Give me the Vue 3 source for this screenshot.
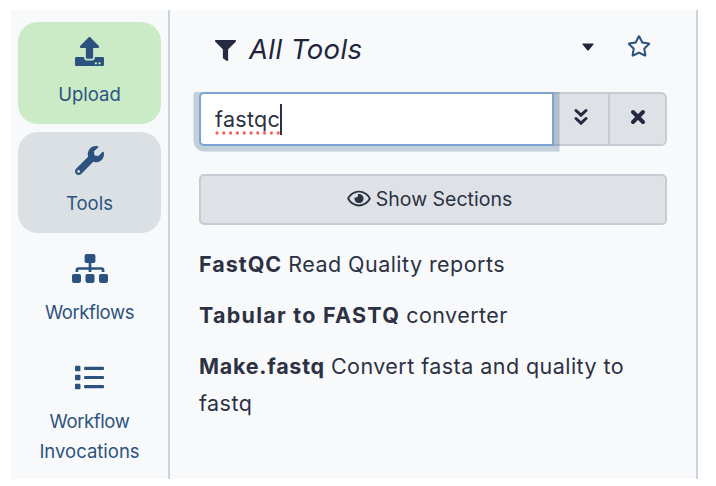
<script setup>
import { ref } from 'vue'

const query = ref('fastqc')

const activities = [
  { id: 'upload', lines: ['Upload'] },
  { id: 'tools', lines: ['Tools'] },
  { id: 'workflows', lines: ['Workflows'] },
  { id: 'invocations', lines: ['Workflow', 'Invocations'] },
]

const tools = [
  { id: 'fastqc', name: 'FastQC', description: 'Read Quality reports' },
  { id: 'tabular', name: 'Tabular to FASTQ', description: 'converter' },
  { id: 'make', name: 'Make.fastq', description: 'Convert fasta and quality to fastq' },
]
</script>

<template>
  <div class="page">
    <div class="app">
      <nav class="activity-bar">
        <div v-for="item in activities" :key="item.id" class="activity" :class="item.id">
          <svg v-if="item.id === 'upload'" class="activity-icon" viewBox="0 0 512 512">
            <path d="M296 384h-80c-13.3 0-24-10.7-24-24V192h-87.7c-17.8 0-26.7-21.5-14.1-34.1L242.3 5.7c7.5-7.5 19.8-7.5 27.3 0l152.2 152.2c12.6 12.6 3.7 34.1-14.1 34.1H320v168c0 13.3-10.7 24-24 24zm216-8v112c0 13.3-10.7 24-24 24H24c-13.3 0-24-10.7-24-24V376c0-13.3 10.7-24 24-24h136v8c0 30.9 25.1 56 56 56h80c30.9 0 56-25.1 56-56v-8h136c13.3 0 24 10.7 24 24zm-124 88c0-11-9-20-20-20s-20 9-20 20 9 20 20 20 20-9 20-20zm64 0c0-11-9-20-20-20s-20 9-20 20 9 20 20 20 20-9 20-20z" />
          </svg>
          <svg v-else-if="item.id === 'tools'" class="activity-icon" viewBox="0 0 512 512">
            <path d="M507.73 109.1c-2.24-9.03-13.54-12.09-20.12-5.51l-74.36 74.36-67.88-11.31-11.31-67.88 74.36-74.36c6.62-6.62 3.43-17.9-5.66-20.16-47.38-11.74-99.55.91-136.58 37.93-39.64 39.64-50.55 97.1-34.05 147.2L18.74 402.76c-24.99 24.99-24.99 65.51 0 90.5 24.99 24.99 65.51 24.99 90.5 0l213.21-213.21c50.12 16.71 107.47 5.68 147.37-34.22 37.07-37.07 49.7-89.32 37.91-136.73zM64 472c-13.25 0-24-10.75-24-24 0-13.26 10.75-24 24-24s24 10.74 24 24c0 13.25-10.75 24-24 24z" />
          </svg>
          <svg v-else-if="item.id === 'workflows'" class="activity-icon wide" viewBox="0 0 640 512">
            <rect x="224" y="0" width="192" height="160" rx="32" />
            <rect x="0" y="352" width="160" height="160" rx="32" />
            <rect x="240" y="352" width="160" height="160" rx="32" />
            <rect x="480" y="352" width="160" height="160" rx="32" />
            <path d="M296 150h48v82h186c26 0 46 20 46 46v42h-48v-40H344v40h-48v-40H112v40H64v-42c0-26 20-46 46-46h186z" />
          </svg>
          <svg v-else class="activity-icon" viewBox="0 0 512 512">
            <rect x="0" y="48" width="96" height="96" rx="16" />
            <rect x="0" y="208" width="96" height="96" rx="16" />
            <rect x="0" y="368" width="96" height="96" rx="16" />
            <rect x="160" y="68" width="352" height="56" rx="16" />
            <rect x="160" y="228" width="352" height="56" rx="16" />
            <rect x="160" y="388" width="352" height="56" rx="16" />
          </svg>
          <div class="activity-label">
            <div v-for="line in item.lines" :key="line" :class="{ tight: line.startsWith('Work') }">{{ line }}</div>
          </div>
        </div>
      </nav>

      <main class="tool-panel">
        <header class="panel-header">
          <svg class="filter-icon" viewBox="0 0 512 512">
            <path d="M487.976 0H24.028C2.71 0-8.047 25.866 7.058 40.971L192 225.941V432c0 7.831 3.821 15.17 10.237 19.662l80 55.98C298.02 518.69 320 507.493 320 487.98V225.941l184.947-184.97C520.021 25.896 509.338 0 487.976 0z" />
          </svg>
          <h2 class="panel-title">All Tools</h2>
          <svg class="caret-icon" viewBox="0 0 12 8"><path d="M1 .5h10q1 0 .4.9L7 6.9q-1 1-2 0L.6 1.4Q0 .5 1 .5z" /></svg>
          <svg class="star-icon" viewBox="0 0 576 512">
            <path d="M528.1 171.5L382 150.2 316.7 17.8c-11.7-23.6-45.6-23.9-57.4 0L194 150.2 47.9 171.5c-26.2 3.8-36.7 36.1-17.7 54.6l105.7 103-25 145.5c-4.5 26.3 23.2 46 46.4 33.7L288 439.6l130.7 68.7c23.2 12.2 50.9-7.4 46.4-33.7l-25-145.5 105.7-103c19-18.5 8.5-50.8-17.7-54.6zM388.6 312.3l23.7 138.4L288 385.4l-124.3 65.3 23.7-138.4-100.6-98 139-20.2 62.2-126 62.2 126 139 20.2-100.6 98z" />
          </svg>
        </header>

        <div class="search">
          <div class="search-field">
            <span class="query">{{ query }}<svg class="spelling" viewBox="0 0 66 4"><path d="M2 2H65" /></svg></span><span class="cursor"></span>
          </div>
          <button class="search-button advanced">
            <svg class="chevrons" viewBox="0 0 14 18"><path d="M2 2.5l5 4.7 5-4.7M2 10.5l5 4.7 5-4.7" /></svg>
          </button>
          <button class="search-button clear">
            <svg class="cross" viewBox="0 0 16 16"><path d="M3 3l10 10M13 3L3 13" /></svg>
          </button>
        </div>

        <button class="sections-button">
          <svg class="eye" viewBox="0 0 576 512">
            <path d="M288 144a110.94 110.94 0 0 0-31.24 5 55.4 55.4 0 0 1 7.24 27 56 56 0 0 1-56 56 55.4 55.4 0 0 1-27-7.24A111.71 111.71 0 1 0 288 144zm284.52 97.4C518.29 135.59 410.93 64 288 64S57.68 135.64 3.48 241.41a32.35 32.35 0 0 0 0 29.19C57.71 376.41 165.07 448 288 448s230.32-71.64 284.52-177.41a32.35 32.35 0 0 0 0-29.19zM288 400c-98.65 0-189.09-55-237.93-144C98.91 167 189.34 112 288 112s189.09 55 237.93 144C477.1 345 386.66 400 288 400z" />
          </svg>
          <span class="sections-label">Show Sections</span>
        </button>

        <div class="tool-list">
          <div v-for="tool in tools" :key="tool.id" class="tool" :class="'tool-' + tool.id">
            <b>{{ tool.name }}</b> <span>{{ tool.description }}</span>
          </div>
        </div>
      </main>
    </div>
  </div>
</template>

<style>
body {
  background: #fff;
}
</style>

<style scoped>
.page {
  box-sizing: border-box;
  width: 716px;
  height: 486px;
  padding: 10px 18px 7px 11px;
  overflow: hidden;
  font-family: Inter, "Liberation Sans", sans-serif;
  color: #2c3143;
}
.app {
  box-sizing: border-box;
  display: flex;
  height: 469px;
  background: #f8f9fb;
  border-right: 2px solid #ccd3db;
}
.activity-bar {
  box-sizing: border-box;
  display: flex;
  flex-direction: column;
  gap: 8px;
  flex: 0 0 159px;
  padding: 12px 7px 0 7px;
  border-right: 2px solid #ccd3db;
  color: #2c5380;
}
.activity {
  box-sizing: border-box;
  display: flex;
  flex-direction: column;
  align-items: center;
  flex: 0 0 101px;
  padding-top: 13px;
  border-radius: 20px;
}
.activity.upload {
  flex-basis: 102px;
  padding-top: 15px;
  background: #cbeac6;
}
.activity.tools {
  padding-top: 14px;
  background: #dbe0e5;
}
.activity-icon {
  flex: none;
  width: 29px;
  height: 29px;
  fill: currentColor;
}
.activity-icon.wide {
  width: 36px;
}
.activity-label {
  margin-top: 14px;
  font-size: 18.5px;
  line-height: 29.5px;
  text-align: center;
  white-space: nowrap;
}
.workflows .activity-label,
.invocations .activity-label {
  margin-top: 15px;
}
.activity-label .tight {
  letter-spacing: -0.4px;
}
.tool-panel {
  box-sizing: border-box;
  flex: 1;
  min-width: 0;
  padding: 20px 29px 0;
}
.panel-header {
  display: flex;
  align-items: center;
  height: 38px;
  padding: 0 16px;
}
.filter-icon {
  width: 21px;
  height: 21px;
  margin-top: 3px;
  fill: #252a42;
}
.panel-title {
  flex: 1;
  margin: 0 0 0 13px;
  font-size: 27.5px;
  font-style: italic;
  font-weight: 400;
  letter-spacing: 0.4px;
  line-height: 38px;
  color: #20253d;
}
.caret-icon {
  width: 12px;
  height: 8px;
  margin-right: 33px;
  margin-top: -4px;
  fill: #20253d;
}
.star-icon {
  width: 24px;
  height: 22px;
  margin-top: -6px;
  fill: #2c5380;
}
.search {
  display: flex;
  height: 54px;
  margin-top: 24px;
}
.search-field {
  box-sizing: border-box;
  position: relative;
  z-index: 1;
  display: flex;
  align-items: center;
  flex: 1;
  padding-left: 14px;
  border: 2px solid #7ca3d2;
  border-radius: 5px 0 0 5px;
  background: #fff;
  box-shadow: 0 0 0 5.5px rgba(37, 83, 122, 0.25);
  clip-path: inset(0 -6px -6px -6px);
  font-size: 21.5px;
  letter-spacing: 0.3px;
  line-height: 30px;
}
.query {
  position: relative;
}
.spelling {
  position: absolute;
  left: 0;
  bottom: -1px;
  width: 66px;
  height: 4px;
}
.spelling path {
  fill: none;
  stroke: #f0665c;
  stroke-width: 3.3;
  stroke-linecap: round;
  stroke-dasharray: 0 6.8;
}
.cursor {
  width: 1.5px;
  height: 31px;
  background: #2c3143;
}
.search-button,
.sections-button {
  box-sizing: border-box;
  display: flex;
  align-items: center;
  justify-content: center;
  padding: 0;
  border: 2px solid #c5ccd4;
  background: #dee2e6;
  font: inherit;
  color: inherit;
}
.advanced {
  width: 54px;
  border-width: 2px 0;
}
.clear {
  width: 59px;
  border-radius: 0 6px 6px 0;
}
.chevrons {
  width: 14px;
  height: 18px;
  margin-top: -4px;
}
.cross {
  width: 16px;
  height: 16px;
  margin-top: -4px;
}
.chevrons path,
.cross path {
  fill: none;
  stroke: #252a42;
  stroke-width: 3;
  stroke-linecap: round;
}
.cross path {
  stroke-width: 4;
}
.sections-button {
  width: 100%;
  height: 51px;
  margin-top: 28px;
  padding: 0 7px 2px 0;
  border-radius: 5px;
  font-size: 19.5px;
}
.eye {
  width: 24px;
  height: 21px;
  margin-right: 5px;
  fill: #2c3143;
}
.tool-list {
  margin-top: 21px;
  font-size: 21.5px;
  line-height: 37px;
}
.tool + .tool {
  margin-top: 14px;
}
.tool span {
  letter-spacing: 0.45px;
}
.tool-fastqc b {
  letter-spacing: 1px;
}
.tool-tabular b {
  letter-spacing: 1.25px;
}
.tool-make b {
  letter-spacing: 0.75px;
}
</style>
